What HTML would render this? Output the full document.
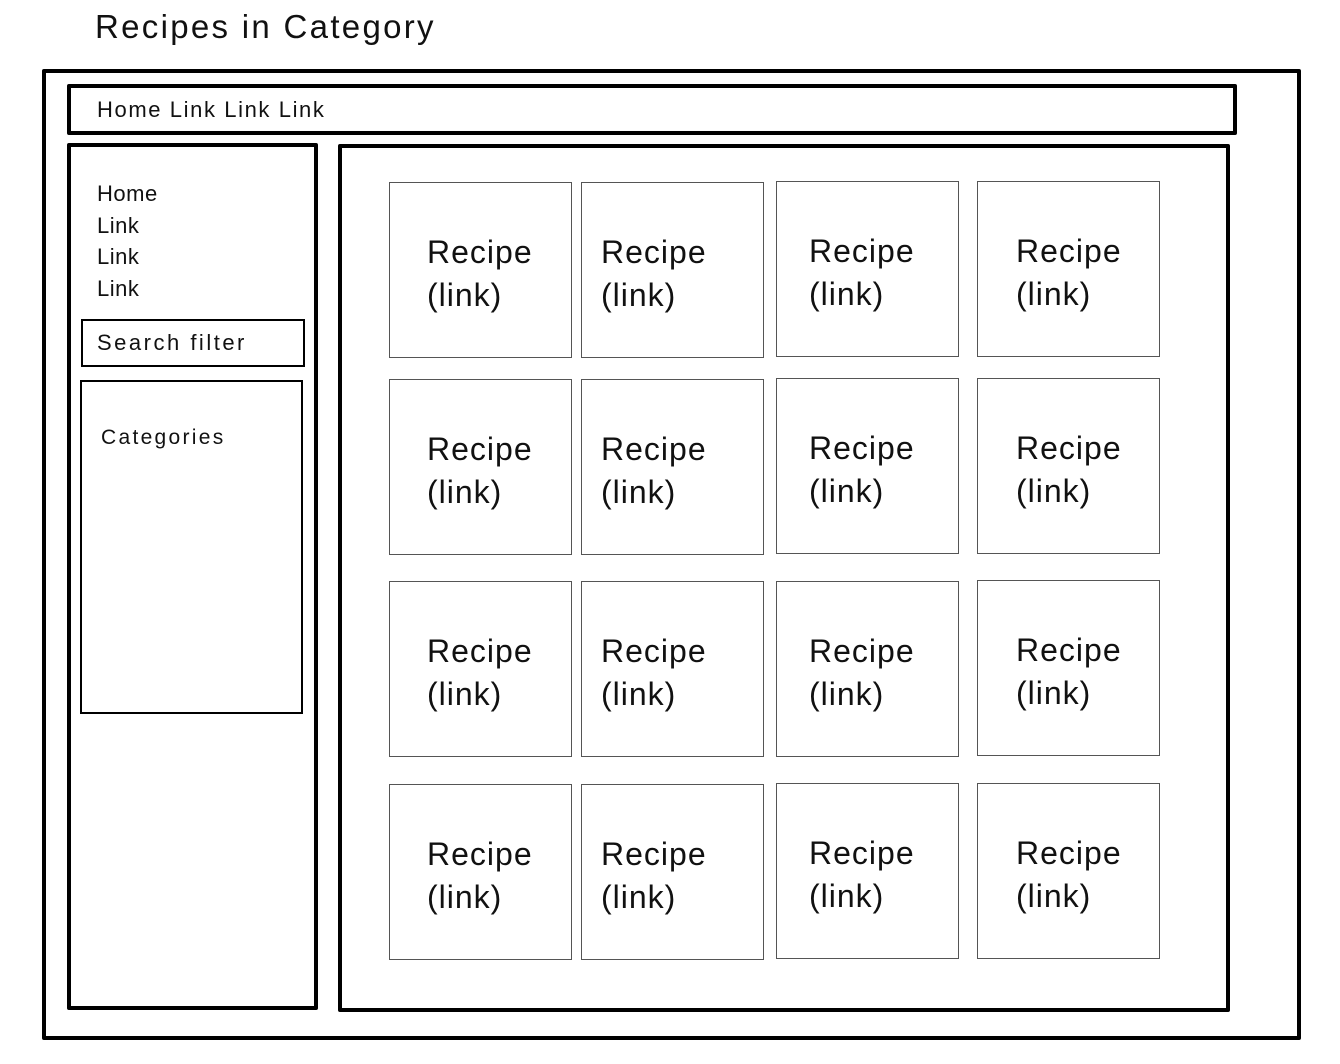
<!DOCTYPE html>
<html><head><meta charset="utf-8"><style>
body{margin:0;width:1340px;height:1064px;background:#fff;position:relative;overflow:hidden;font-family:"Liberation Sans",sans-serif;color:#111}
.a{position:absolute;box-sizing:border-box}
.t{position:absolute;white-space:nowrap}
.card{position:absolute;box-sizing:border-box;border:1.5px solid #555;width:183px;height:176px}
.card span{position:absolute;left:37px;top:48px;font-size:32px;line-height:43px;letter-spacing:1px}
</style></head><body>
<div class="t" style="left:95px;top:8px;font-size:33px;letter-spacing:2.3px">Recipes in Category</div>
<div class="a" style="left:42px;top:69px;width:1259px;height:971px;border:4px solid #000;border-radius:2px"></div>
<div class="a" style="left:67px;top:84px;width:1170px;height:51px;border:4px solid #000;border-radius:2px"></div>
<div class="t" style="left:97px;top:97px;font-size:22px;letter-spacing:1.6px">Home Link Link Link</div>
<div class="a" style="left:67px;top:143px;width:251px;height:867px;border:4px solid #000;border-radius:2px"></div>
<div class="t" style="left:97px;top:178px;font-size:22px;line-height:31.5px;letter-spacing:0.5px">Home<br>Link<br>Link<br>Link</div>
<div class="a" style="left:81px;top:319px;width:224px;height:48px;border:2px solid #000"></div>
<div class="t" style="left:97px;top:330px;font-size:22px;letter-spacing:2.5px">Search filter</div>
<div class="a" style="left:80px;top:380px;width:223px;height:334px;border:2px solid #000"></div>
<div class="t" style="left:101px;top:426px;font-size:21px;letter-spacing:2.3px">Categories</div>
<div class="a" style="left:338px;top:144px;width:892px;height:868px;border:4px solid #000;border-radius:2px"></div>
<div class="card" style="left:389px;top:182px"><span>Recipe<br>(link)</span></div>
<div class="card" style="left:581px;top:182px"><span style="left:19px">Recipe<br>(link)</span></div>
<div class="card" style="left:776px;top:181px"><span style="left:32px">Recipe<br>(link)</span></div>
<div class="card" style="left:977px;top:181px"><span style="left:38px">Recipe<br>(link)</span></div>
<div class="card" style="left:389px;top:379px"><span>Recipe<br>(link)</span></div>
<div class="card" style="left:581px;top:379px"><span style="left:19px">Recipe<br>(link)</span></div>
<div class="card" style="left:776px;top:378px"><span style="left:32px">Recipe<br>(link)</span></div>
<div class="card" style="left:977px;top:378px"><span style="left:38px">Recipe<br>(link)</span></div>
<div class="card" style="left:389px;top:581px"><span>Recipe<br>(link)</span></div>
<div class="card" style="left:581px;top:581px"><span style="left:19px">Recipe<br>(link)</span></div>
<div class="card" style="left:776px;top:581px"><span style="left:32px">Recipe<br>(link)</span></div>
<div class="card" style="left:977px;top:580px"><span style="left:38px">Recipe<br>(link)</span></div>
<div class="card" style="left:389px;top:784px"><span>Recipe<br>(link)</span></div>
<div class="card" style="left:581px;top:784px"><span style="left:19px">Recipe<br>(link)</span></div>
<div class="card" style="left:776px;top:783px"><span style="left:32px">Recipe<br>(link)</span></div>
<div class="card" style="left:977px;top:783px"><span style="left:38px">Recipe<br>(link)</span></div>
</body></html>
